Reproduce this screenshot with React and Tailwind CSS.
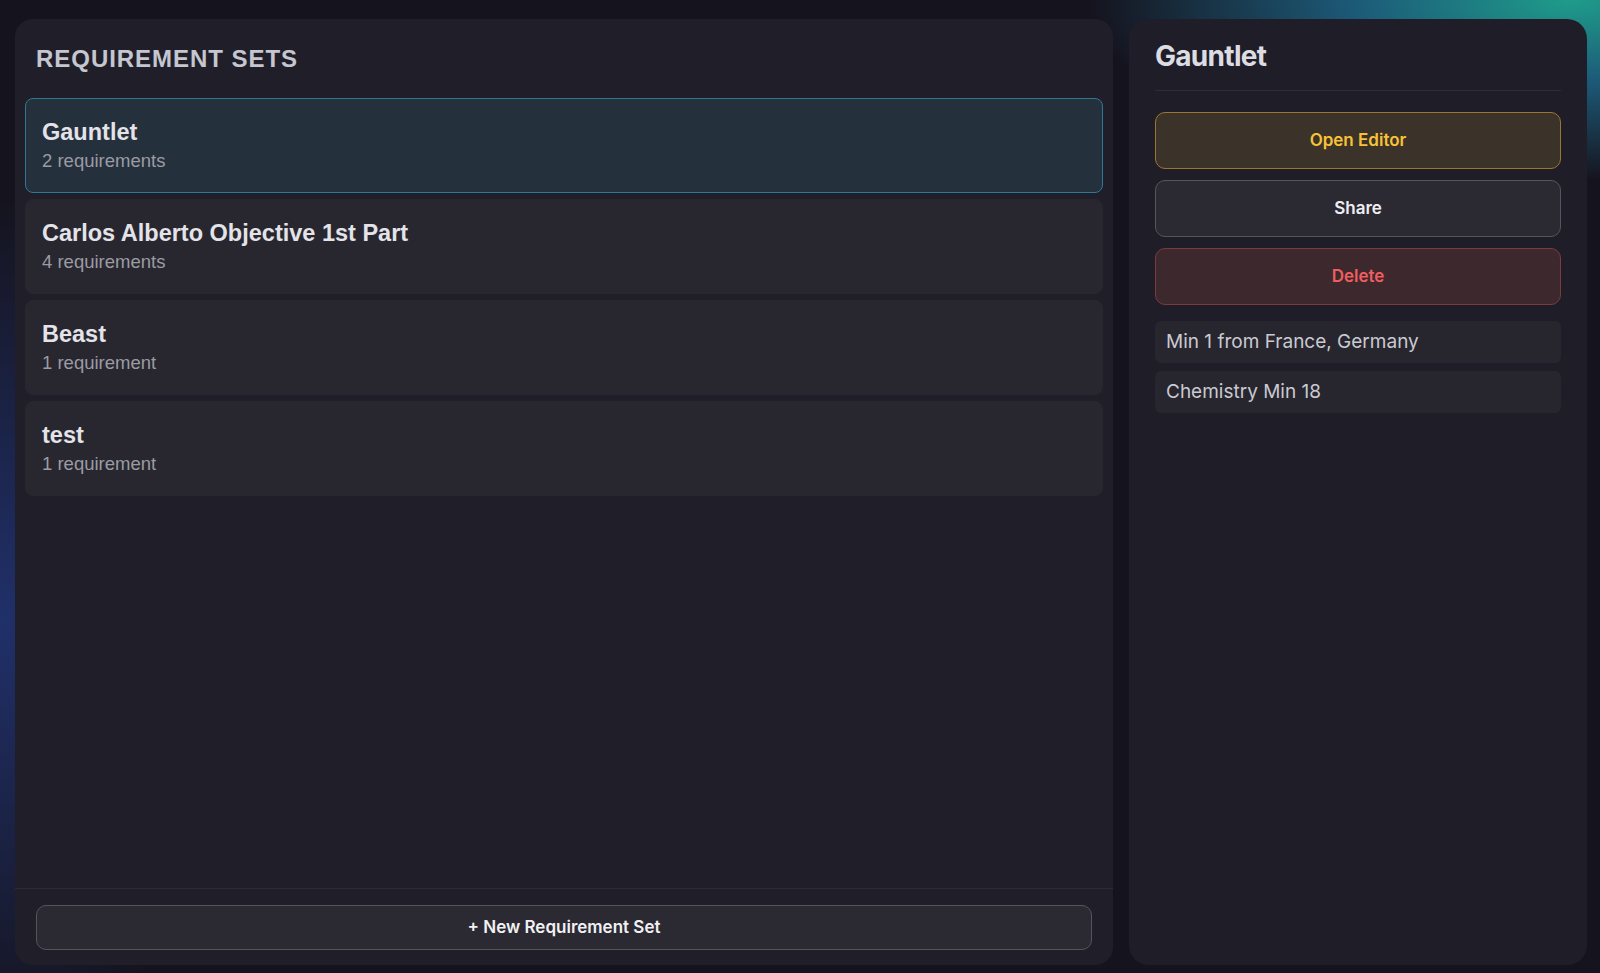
/**
 * Requirement sets screen
 * Left: list of sets, right: details for the selected one
 */
import { useState } from 'react'

const sets = [
  { id: 1, name: 'Gauntlet', count: 2, requirements: ['Min 1 from France, Germany', 'Chemistry Min 18'] },
  { id: 2, name: 'Carlos Alberto Objective 1st Part', count: 4, requirements: [] },
  { id: 3, name: 'Beast', count: 1, requirements: [] },
  { id: 4, name: 'test', count: 1, requirements: [] },
]

const sans = "font-['Liberation_Sans',Arial,sans-serif]"
const geo = "font-['Inter','Noto_Sans',sans-serif]"

const SetRow = ({ set, selected, onClick }) => (
  <button
    onClick={onClick}
    className={`
      w-full text-left rounded-lg border px-4 py-[18px]
      ${selected ? 'bg-[#25303d] border-[#2e7897]' : 'bg-[#28272f] border-[#28272f]'}
    `}
  >
    <div className={`${sans} text-[23.5px] leading-[31px] font-bold text-[#e3e3e9]`}>{set.name}</div>
    <div className={`${sans} text-[18.5px] leading-[26px] text-[#9b9ba3]`}>
      {set.count} {set.count === 1 ? 'requirement' : 'requirements'}
    </div>
  </button>
)

const App = () => {
  const [selectedId, setSelectedId] = useState(1)
  const selected = sets.find((s) => s.id === selectedId)

  return (
    <div className="h-screen w-full overflow-hidden bg-[#15141e] bg-[radial-gradient(ellipse_480px_180px_at_1570px_0px,#1f9c8a_0%,#1c5a78_45%,transparent_100%),radial-gradient(ellipse_260px_420px_at_0px_620px,#20306a_0%,transparent_100%)] flex gap-4 pl-[15px] pr-[13px] pt-[19px] pb-[8px]">
      {/* Sets list */}
      <div className="flex-1 flex flex-col rounded-[18px] bg-[#201f29] overflow-hidden">
        <div className="px-[21px] pt-6 pb-[13px]">
          <h2 className={`${sans} text-2xl leading-8 font-bold tracking-[0.04em] uppercase text-[#c5c6d0]`}>
            Requirement Sets
          </h2>
        </div>
        <div className="flex-1 flex flex-col gap-[6px] px-[10px] pt-[10px]">
          {sets.map((set) => (
            <SetRow
              key={set.id}
              set={set}
              selected={set.id === selectedId}
              onClick={() => setSelectedId(set.id)}
            />
          ))}
        </div>
        <div className="border-t border-[#2c2b35] px-[21px] pt-4 pb-[15px]">
          <button className={`${geo} w-full h-[45px] rounded-[10px] border border-[#55545c] bg-[#2b2a33] text-[17px] font-semibold text-[#f1f1f4]`}>
            + New Requirement Set
          </button>
        </div>
      </div>

      {/* Details */}
      <div className="w-[458px] flex flex-col rounded-[20px] bg-[#1f1e28] px-[26px] pt-[19px]">
        <h1 className={`${geo} text-[28px] leading-9 font-bold tracking-tight text-[#dcdce3] pb-4 border-b border-[#2e2d37]`}>
          {selected.name}
        </h1>
        <div className="flex flex-col gap-[11px] mt-[21px]">
          <button className={`${geo} h-[57px] rounded-[10px] border border-[#9b762f] bg-[#3b3329] text-[17px] font-semibold text-[#f8c238]`}>
            Open Editor
          </button>
          <button className={`${geo} h-[57px] rounded-[10px] border border-[#56555c] bg-[#2b2a33] text-[17px] font-semibold text-[#eeeef2]`}>
            Share
          </button>
          <button className={`${geo} h-[57px] rounded-[10px] border border-[#7b3a3f] bg-[#3d282e] text-[17px] font-semibold text-[#ee5e5e]`}>
            Delete
          </button>
        </div>
        <div className="flex flex-col gap-2 mt-4">
          {selected.requirements.map((req) => (
            <div key={req} className={`${geo} rounded-md bg-[#27262f] px-[11px] py-2 text-[19px] leading-[26px] text-[#cacad1]`}>
              {req}
            </div>
          ))}
        </div>
      </div>
    </div>
  )
}

export default App
